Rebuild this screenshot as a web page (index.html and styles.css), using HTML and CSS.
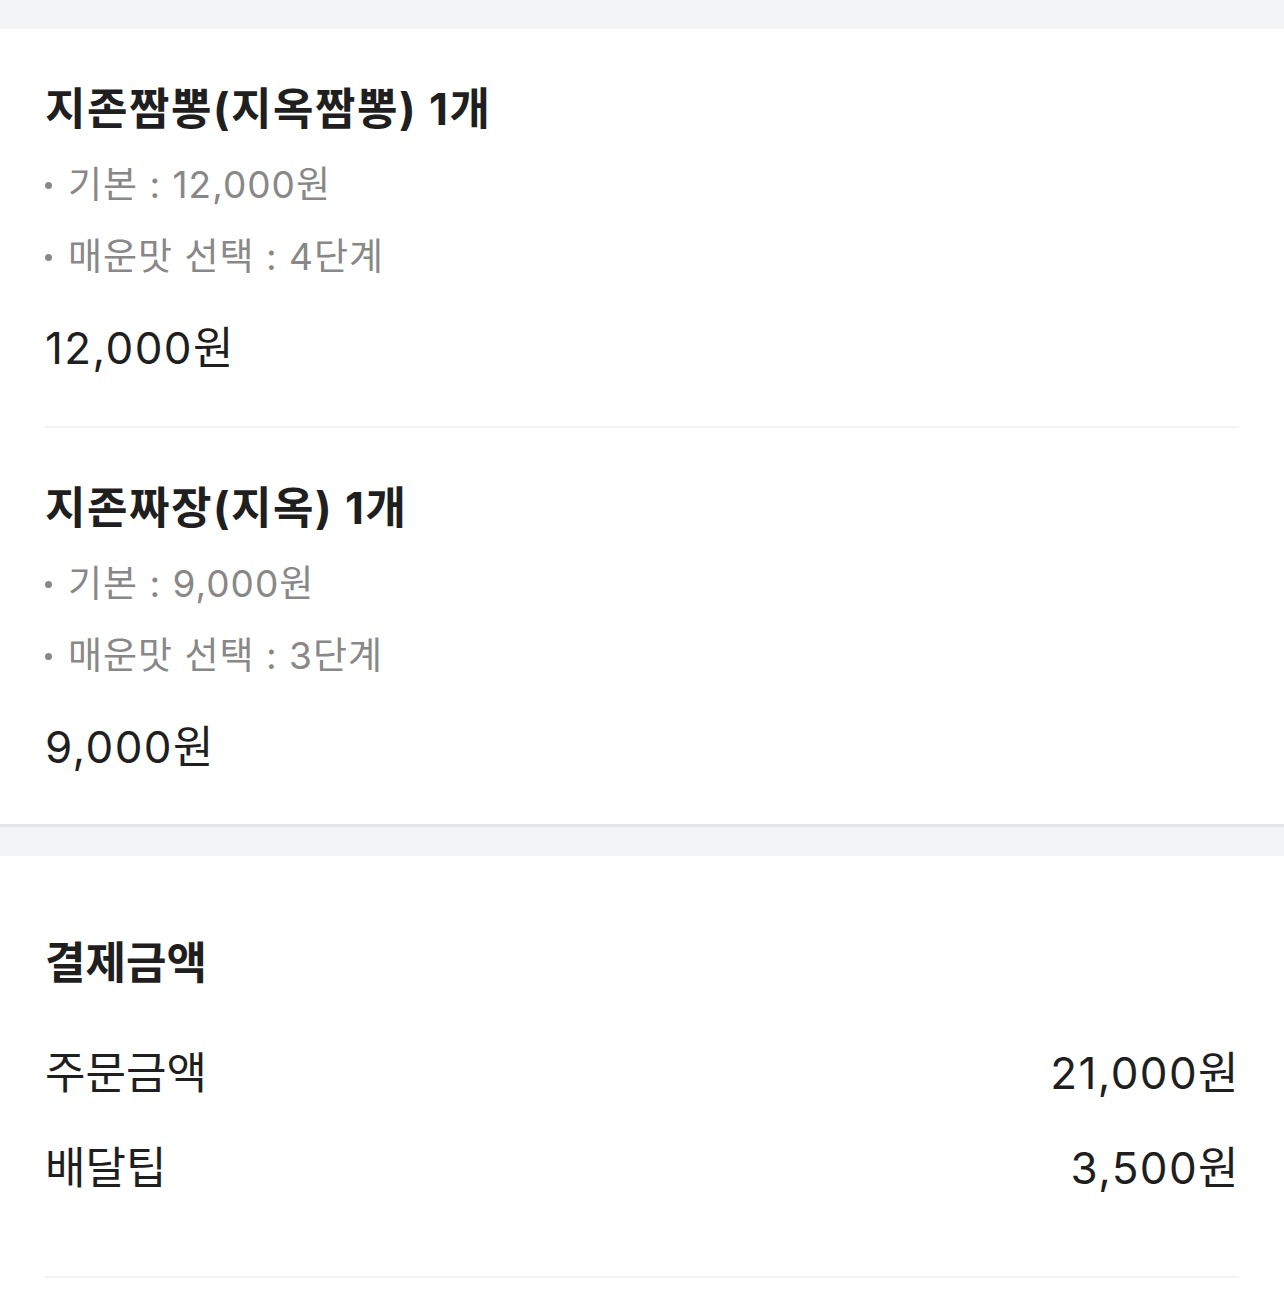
FILE: index.html
```html
<!DOCTYPE html>
<html lang="ko">
<head>
    <meta charset="UTF-8">
    <meta name="viewport" content="width=device-width, initial-scale=1.0">
    <title>주문 상세</title>
    <link rel="stylesheet" href="styles.css">
</head>
<body>
    <div class="spacer"></div>
    <section class="card order-items">
        <div class="order-item">
            <h2 class="item-name">지존짬뽕(지옥짬뽕) 1개</h2>
            <ul class="option-list">
                <li>기본 : 12,000원</li>
                <li>매운맛 선택 : 4단계</li>
            </ul>
            <p class="item-price">12,000원</p>
        </div>
        <div class="order-item">
            <h2 class="item-name">지존짜장(지옥) 1개</h2>
            <ul class="option-list">
                <li>기본 : 9,000원</li>
                <li>매운맛 선택 : 3단계</li>
            </ul>
            <p class="item-price">9,000원</p>
        </div>
    </section>
    <div class="spacer"></div>
    <section class="card payment">
        <h2 class="section-title">결제금액</h2>
        <div class="pay-row">
            <span>주문금액</span>
            <span class="amount">21,000원</span>
        </div>
        <div class="pay-row">
            <span>배달팁</span>
            <span class="amount">3,500원</span>
        </div>
        <div class="pay-divider"></div>
    </section>
</body>
</html>
```

FILE: styles.css
```css
body {
    margin: 0;
    padding: 0;
    background-color: #f3f4f6;
    font-family: Inter, "Noto Sans CJK KR", sans-serif;
    color: #1f1f1f;
}

.spacer {
    height: 29px;
}

.card {
    background-color: #fff;
    padding: 0 45px;
}

.order-items {
    border-bottom: 3px solid #e5e6e8;
}

.order-item {
    padding: 52px 0 49px;
}

.order-item + .order-item {
    border-top: 2px solid #f1f2f3;
}

.order-item:first-child {
    padding-bottom: 50px;
}

h2 {
    margin: 0;
}

.item-name {
    font-size: 44px;
    font-weight: 700;
    line-height: 56px;
    letter-spacing: 1.5px;
}

.option-list {
    list-style: none;
    margin: 12px 0 0;
    padding: 0;
}

.option-list li {
    display: flex;
    align-items: center;
    font-size: 37px;
    line-height: 72px;
    color: #888;
    letter-spacing: 1px;
}

.option-list li::before {
    content: "";
    width: 7px;
    height: 7px;
    border-radius: 50%;
    background-color: #888;
    margin-right: 16px;
}

.item-price {
    margin: 27px 0 0;
    font-size: 44px;
    line-height: 56px;
    letter-spacing: 1.4px;
}

.payment {
    min-height: 600px;
}

.section-title {
    padding-top: 79px;
    font-size: 44px;
    font-weight: 700;
    line-height: 56px;
}

.pay-row {
    display: flex;
    justify-content: space-between;
    font-size: 44px;
    line-height: 56px;
    margin-top: 39px;
}

.pay-row .amount {
    letter-spacing: 1.4px;
    margin-right: -1px;
}

.section-title + .pay-row {
    margin-top: 54px;
}

.pay-divider {
    height: 2px;
    margin-top: 80px;
    background-color: #f1f2f3;
}
```
